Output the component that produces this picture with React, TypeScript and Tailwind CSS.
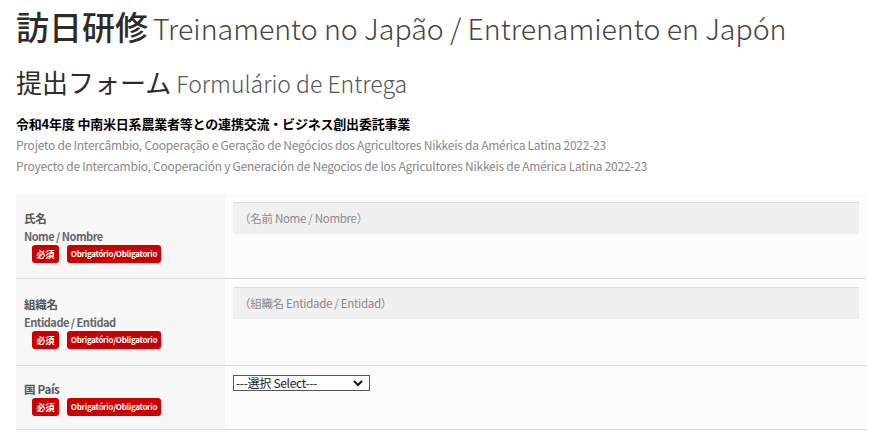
import React from "react";

const font = { fontFamily: '"Noto Sans CJK JP", "Noto Sans", sans-serif' };

function Badges() {
  return (
    <div className="flex gap-2 pl-2">
      <span className="flex h-[18px] w-[27px] items-center justify-center rounded-[3px] bg-[#cc0000] text-[9px] font-bold leading-none text-white">
        必須
      </span>
      <span className="flex h-[18px] w-[94px] items-center justify-center rounded-[3px] bg-[#cc0000] text-[8px] font-bold leading-none tracking-[-0.3px] text-white">
        Obrigatório/Obligatorio
      </span>
    </div>
  );
}

function Row({
  jp,
  sub,
  pad,
  children,
}: {
  jp: string;
  sub?: string;
  pad: string;
  children: React.ReactNode;
}) {
  return (
    <div className="flex border-b border-[#dcdcdc]">
      <div className={`w-[209px] shrink-0 bg-[#f7f7f7] px-2 ${pad}`}>
        <div className="text-[11.5px] font-bold leading-[18px] tracking-[-0.3px] text-[#555]">{jp}</div>
        {sub && (
          <div className="text-[11px] font-bold leading-[18px] tracking-[-0.5px] text-[#666]">{sub}</div>
        )}
        <Badges />
      </div>
      <div className="flex-1 bg-[#fcfcfc] px-2 pt-2">{children}</div>
    </div>
  );
}

function FakeInput({ text }: { text: string }) {
  return (
    <div className="flex h-[32px] items-center border-t border-[#dddddd] bg-[#f0f0f0] pl-[6px] text-[11.5px] tracking-[-0.3px] text-[#8a8a8a]">
      {text}
    </div>
  );
}

export default function App() {
  return (
    <div style={font} className="min-h-[439px] w-[881px] bg-white pl-4 pt-[6px] text-[#333]">
      <h1 className="flex items-baseline gap-[5px] text-[33px] leading-[41px]">
        <span className="font-medium text-[#2b2b2b]">訪日研修</span>
        <span className="text-[28.5px] font-light text-[#444]">
          Treinamento no Japão / Entrenamiento en Japón
        </span>
      </h1>
      <h2 className="mt-[16px] flex items-baseline gap-[5px] text-[26px] leading-[36px]">
        <span className="text-[#2b2b2b]">提出フォーム</span>
        <span className="text-[23px] font-light text-[#555]">Formulário de Entrega</span>
      </h2>
      <div className="mt-[12px] text-[13px] font-bold leading-[21px] tracking-[-0.2px] text-black">
        令和4年度 中南米日系農業者等との連携交流・ビジネス創出委託事業
      </div>
      <div className="text-[12px] leading-[21px] tracking-[-0.25px] text-[#888]">
        Projeto de Intercâmbio, Cooperação e Geração de Negócios dos Agricultores Nikkeis da América Latina 2022-23
      </div>
      <div className="text-[12px] leading-[21px] tracking-[-0.25px] text-[#888]">
        Proyecto de Intercambio, Cooperación y Generación de Negocios de los Agricultores Nikkeis de América Latina 2022-23
      </div>

      <div className="mt-[18px] w-[851px]">
        <Row jp="氏名" sub="Nome / Nombre" pad="pt-[15px] pb-[15px]">
          <FakeInput text="（名前 Nome / Nombre）" />
        </Row>
        <Row jp="組織名" sub="Entidade / Entidad" pad="pt-[16px] pb-[16px]">
          <FakeInput text="（組織名 Entidade / Entidad）" />
        </Row>
        <Row jp="国 País" pad="pt-[14px] pb-[13px]">
          <div className="mt-px flex h-[16px] w-[137px] items-center justify-between border border-[#555] bg-white pl-[2px] pr-[6px]">
            <span className="text-[12px] leading-none tracking-[-0.3px] text-[#222]">---選択 Select---</span>
            <svg width="10" height="8" viewBox="0 0 10 8">
              <path d="M1 2 L5 6 L9 2" stroke="#111" strokeWidth="2" fill="none" />
            </svg>
          </div>
        </Row>
      </div>
    </div>
  );
}
